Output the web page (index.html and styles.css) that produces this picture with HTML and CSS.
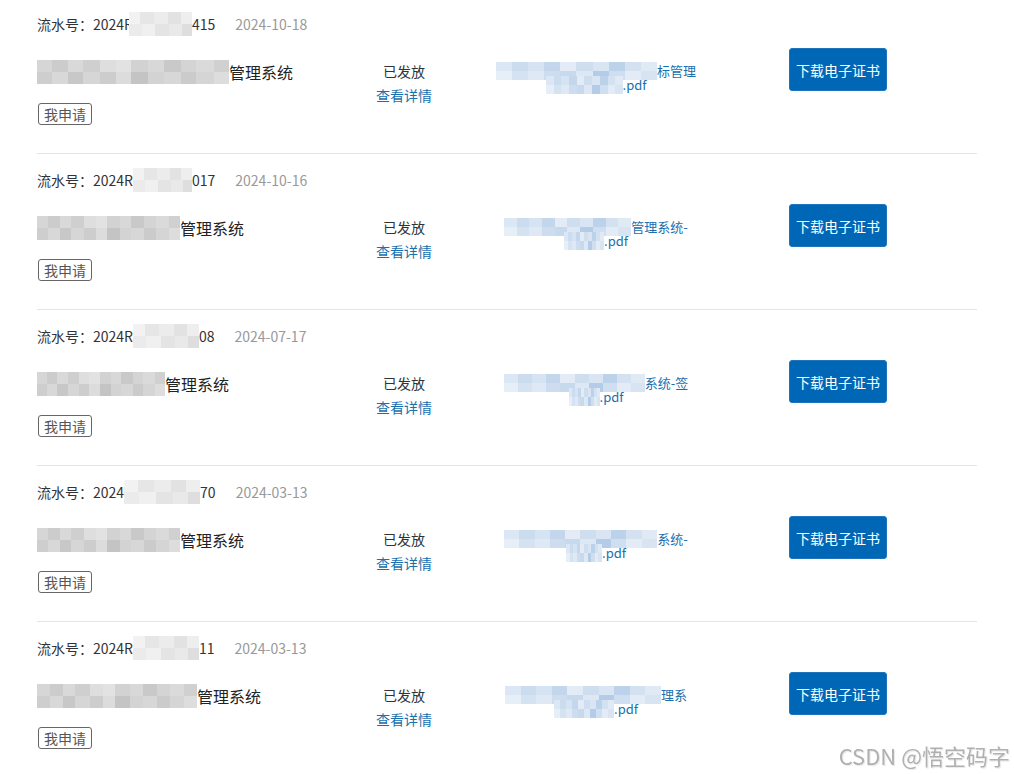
FILE: index.html
```html
<!DOCTYPE html>
<html lang="zh-CN">
<head>
  <meta charset="UTF-8" />
  <meta name="viewport" content="width=device-width, initial-scale=1.0" />
  <title>我的证书</title>
  <link rel="stylesheet" href="styles.css">
</head>
<body>
  <div class="cert-list">

    <div class="cert-item">
      <div class="serial">流水号：2024R<span class="mz mz-light mz-over" style="width:63px"></span>415<span class="date">2024-10-18</span></div>
      <div class="cert-body">
        <div class="info">
          <div class="title"><span class="mz mz-grey" style="width:192px"></span>管理系统</div>
          <span class="tag">我申请</span>
        </div>
        <div class="status">
          <div>已发放</div>
          <a class="detail" href="#">查看详情</a>
        </div>
        <div class="file">
          <div class="file-line"><span class="mz mz-blue" style="width:161px"></span>标管理</div>
          <div class="file-line"><span class="mz mz-blue" style="width:77px"></span>.pdf</div>
        </div>
        <div class="action"><button class="btn">下载电子证书</button></div>
      </div>
    </div>

    <div class="cert-item">
      <div class="serial">流水号：2024R<span class="mz mz-light" style="width:59px"></span>017<span class="date">2024-10-16</span></div>
      <div class="cert-body">
        <div class="info">
          <div class="title"><span class="mz mz-grey" style="width:143px"></span>管理系统</div>
          <span class="tag">我申请</span>
        </div>
        <div class="status">
          <div>已发放</div>
          <a class="detail" href="#">查看详情</a>
        </div>
        <div class="file">
          <div class="file-line"><span class="mz mz-blue" style="width:127px"></span>管理系统-</div>
          <div class="file-line"><span class="mz mz-blue" style="width:40px"></span>.pdf</div>
        </div>
        <div class="action"><button class="btn">下载电子证书</button></div>
      </div>
    </div>

    <div class="cert-item">
      <div class="serial">流水号：2024R<span class="mz mz-light" style="width:66px"></span>08<span class="date">2024-07-17</span></div>
      <div class="cert-body">
        <div class="info">
          <div class="title"><span class="mz mz-grey" style="width:128px"></span>管理系统</div>
          <span class="tag">我申请</span>
        </div>
        <div class="status">
          <div>已发放</div>
          <a class="detail" href="#">查看详情</a>
        </div>
        <div class="file">
          <div class="file-line"><span class="mz mz-blue" style="width:141px"></span>系统-签</div>
          <div class="file-line"><span class="mz mz-blue" style="width:31px"></span>.pdf</div>
        </div>
        <div class="action"><button class="btn">下载电子证书</button></div>
      </div>
    </div>

    <div class="cert-item">
      <div class="serial">流水号：2024<span class="mz mz-light" style="width:76px"></span>70<span class="date">2024-03-13</span></div>
      <div class="cert-body">
        <div class="info">
          <div class="title"><span class="mz mz-grey" style="width:143px"></span>管理系统</div>
          <span class="tag">我申请</span>
        </div>
        <div class="status">
          <div>已发放</div>
          <a class="detail" href="#">查看详情</a>
        </div>
        <div class="file">
          <div class="file-line"><span class="mz mz-blue" style="width:153px"></span>系统-</div>
          <div class="file-line"><span class="mz mz-blue" style="width:36px"></span>.pdf</div>
        </div>
        <div class="action"><button class="btn">下载电子证书</button></div>
      </div>
    </div>

    <div class="cert-item">
      <div class="serial">流水号：2024R<span class="mz mz-light" style="width:66px"></span>11<span class="date">2024-03-13</span></div>
      <div class="cert-body">
        <div class="info">
          <div class="title"><span class="mz mz-grey" style="width:160px"></span>管理系统</div>
          <span class="tag">我申请</span>
        </div>
        <div class="status">
          <div>已发放</div>
          <a class="detail" href="#">查看详情</a>
        </div>
        <div class="file">
          <div class="file-line"><span class="mz mz-blue" style="width:156px"></span>理系</div>
          <div class="file-line"><span class="mz mz-blue" style="width:60px"></span>.pdf</div>
        </div>
        <div class="action"><button class="btn">下载电子证书</button></div>
      </div>
    </div>

  </div>

  <div class="watermark">CSDN @悟空码字</div>
</body>
</html>
```

FILE: styles.css
```css
body {
  margin: 0;
  font-family: "Noto Sans CJK SC", "Noto Sans", sans-serif;
  color: #333;
  background: #fff;
}

.cert-list {
  width: 940px;
  padding: 0 37px;
}

.cert-item {
  padding: 14px 0 28px;
  border-bottom: 1px solid #e5e5e5;
  margin-bottom: 2px;
}

.serial {
  display: flex;
  align-items: center;
  height: 20px;
  font-size: 14px;
  line-height: 20px;
  color: #333;
  white-space: nowrap;
}

.date {
  color: #999;
  margin-left: 20px;
}

.cert-body {
  display: flex;
  align-items: flex-start;
  margin-top: 14px;
}

.info {
  display: flex;
  flex-direction: column;
  align-items: flex-start;
  width: 300px;
  padding-top: 12px;
}

.title {
  display: flex;
  align-items: center;
  height: 24px;
  font-size: 16px;
  line-height: 24px;
  color: #222;
}

.tag {
  display: block;
  margin: 19px 0 0 1px;
  padding: 0 5px;
  border: 1px solid #666;
  border-radius: 3px;
  font-size: 14px;
  line-height: 20px;
  color: #555;
}

.status {
  width: 134px;
  padding-top: 11px;
  text-align: center;
  font-size: 14px;
  line-height: 24px;
  color: #333;
}

.detail {
  display: block;
  color: #1a6fae;
  text-decoration: none;
}

.file {
  width: 250px;
  padding-top: 16px;
  font-size: 13px;
  line-height: 14px;
  color: #1a6fae;
  white-space: nowrap;
}

.file-line {
  display: flex;
  justify-content: center;
  align-items: center;
  height: 14px;
}

.action {
  margin-left: 68px;
}

.btn {
  display: block;
  width: 98px;
  height: 43px;
  padding: 0;
  border: 1px solid #1f74bb;
  border-radius: 3px;
  background: #0067b6;
  color: #fff;
  font-family: inherit;
  font-size: 14px;
  cursor: pointer;
}

/* mosaic blocks standing in for the blurred parts */
.mz {
  display: block;
  flex: none;
}

.serial .mz {
  height: 24px;
}

.mz-over {
  margin-left: -4px;
}

.title .mz {
  height: 24px;
}

.file .mz {
  height: 18px;
}

.mz-light {
  background:
    linear-gradient(90deg, #f2f2f2 0 18%, #e6e6e6 18% 40%, #ececec 40% 62%, #e2e2e2 62% 82%, #eeeeee 82%) top / 100% 50% no-repeat,
    linear-gradient(90deg, #ebebeb 0 20%, #f0f0f0 20% 42%, #e4e4e4 42% 64%, #e9e9e9 64% 84%, #dedede 84%) bottom / 100% 50% no-repeat;
}

.mz-grey {
  background:
    linear-gradient(90deg, #d6d6d6 0 8%, #cccccc 8% 16%, #d9d9d9 16% 24%, #cfcfcf 24% 33%, #dedede 33% 41%, #e2e2e2 41% 49%, #d2d2d2 49% 58%, #d8d8d8 58% 66%, #c9c9c9 66% 75%, #d4d4d4 75% 83%, #dadada 83% 92%, #d0d0d0 92%) top / 100% 50% no-repeat,
    linear-gradient(90deg, #cecece 0 8%, #d8d8d8 8% 16%, #c8c8c8 16% 24%, #d6d6d6 24% 33%, #cdcdcd 33% 41%, #dcdcdc 41% 49%, #c4c4c4 49% 58%, #d3d3d3 58% 66%, #d7d7d7 66% 75%, #cbcbcb 75% 83%, #d5d5d5 83% 92%, #dddddd 92%) bottom / 100% 50% no-repeat;
}

.mz-blue {
  background:
    linear-gradient(90deg, #dbe7f4 0 10%, #cbdcef 10% 20%, #d6e3f2 20% 30%, #c3d6ec 30% 40%, #e2ebf6 40% 50%, #cfdeef 50% 60%, #d9e5f3 60% 70%, #bcd2ea 70% 80%, #d3e1f1 80% 90%, #e0eaf5 90%) top / 100% 50% no-repeat,
    linear-gradient(90deg, #e6eef7 0 10%, #d4e2f1 10% 20%, #dfe9f5 20% 30%, #cddcee 30% 40%, #c7d9ed 40% 50%, #dde8f4 50% 60%, #b4cce8 60% 70%, #d0dff0 70% 80%, #e3ecf6 80% 90%, #d8e4f2 90%) bottom / 100% 50% no-repeat;
}

.watermark {
  position: fixed;
  right: 4px;
  bottom: 6px;
  font-size: 22px;
  line-height: 26px;
  color: #b0b0b0;
  text-shadow: 0 0 1px #fff, 1px 1px 1px #e4e4e4;
  pointer-events: none;
}
```
